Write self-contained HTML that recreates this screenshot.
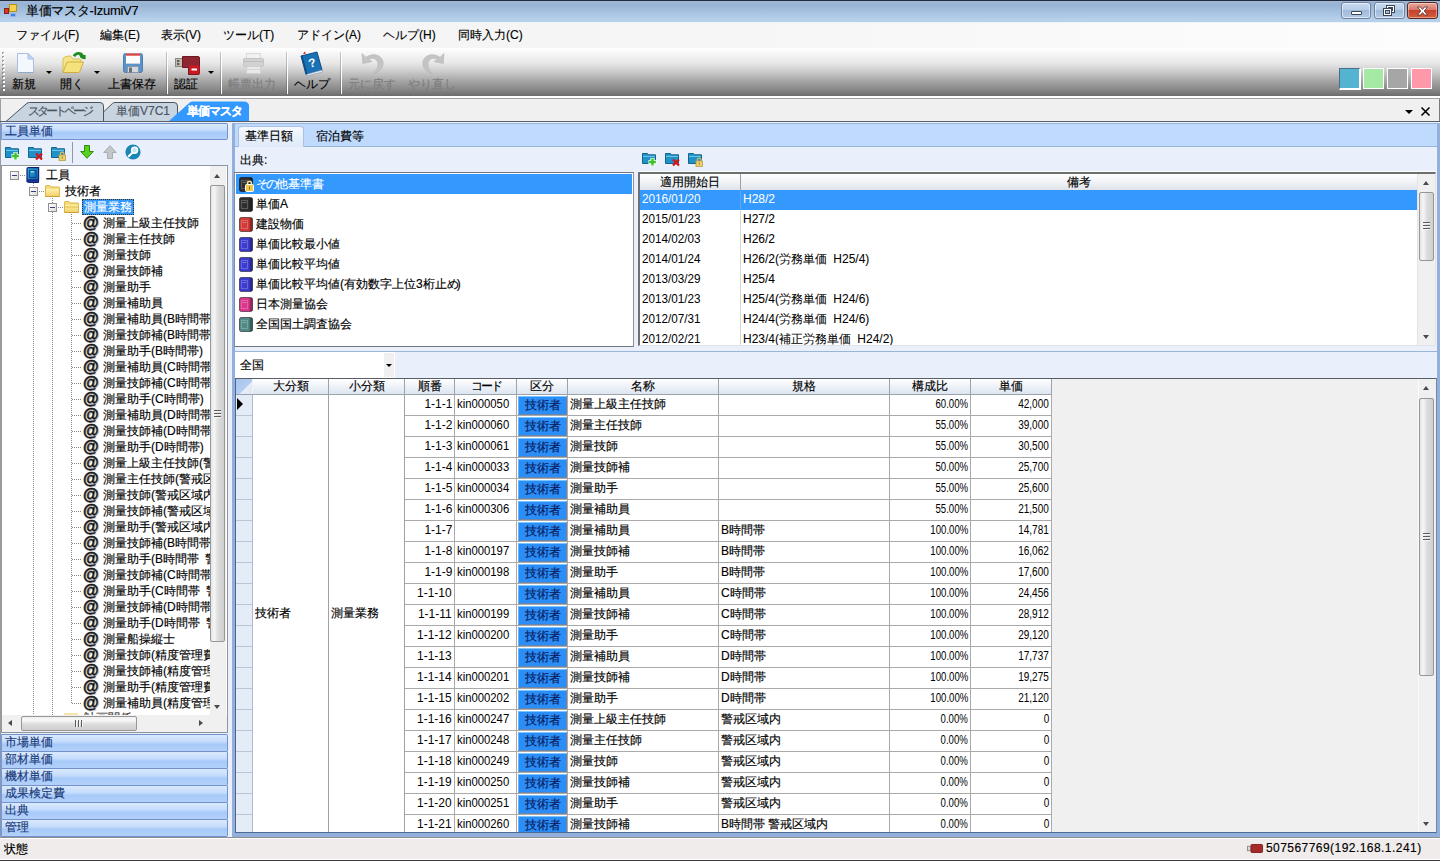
<!DOCTYPE html><html lang="ja"><head><meta charset="utf-8"><title>単価マスタ-IzumiV7</title><style>
*{box-sizing:border-box;margin:0;padding:0}
html,body{width:1440px;height:861px;overflow:hidden;background:#f0f0f0}
body{-webkit-text-stroke:.15px;font-family:"Liberation Sans",sans-serif;font-size:12px;color:#000;position:relative;line-height:1}
.a{position:absolute}
.t{position:absolute;white-space:nowrap;overflow:hidden;line-height:14px;height:14px}
svg{position:absolute;overflow:visible}
#title{left:0;top:0;width:1440px;height:22px;background:linear-gradient(#a9b9d2 0,#9bb5d6 7%,#99b5d5 22%,#a4bfde 46%,#aec9e6 70%,#b7d1ea 90%,#b7cfe8 100%);border-top:1px solid #1f2b3c}
#menu{left:0;top:22px;width:1440px;height:26px;background:linear-gradient(90deg,#f3f3f3,#f6f6f6 50%,#fdfdfd);border-top:1px solid #eef4fb}
#tb{left:0;top:48px;width:1440px;height:48px;background:linear-gradient(#ffffff 0,#f6f6f6 12%,#e8e8e8 31%,#d2d2d2 45%,#bcbcbc 57%,#a4a4a4 70%,#8c8c8c 84%,#6c6c6c 100%)}
.tl{position:absolute;top:77px;height:14px;line-height:14px;white-space:nowrap;text-align:center;font-size:12px}
.sep{position:absolute;top:52px;width:2px;height:42px;border-left:1px solid rgba(60,60,60,.28);border-right:1px solid #fff}
.dd{position:absolute;width:0;height:0;border-left:3px solid transparent;border-right:3px solid transparent;border-top:3px solid #000}
.sq{position:absolute;top:68px;width:22px;height:22px;border:1px solid #fff}
.acc{position:absolute;left:0;width:228px;height:18px;background:linear-gradient(#d9e9fd 0,#c6ddfc 40%,#a8caf9 58%,#b2d0fa 100%);border:1px solid #7392cc;border-left:2px solid #7f97c2;border-radius:2px;color:#1a3a78;padding-left:3px;line-height:14px;white-space:nowrap;overflow:hidden}
.tr{position:absolute;left:103px;width:107px;height:16px;line-height:16px;word-spacing:3px;white-space:nowrap;overflow:hidden}
.at{position:absolute;left:80px;width:21px;height:17px;line-height:15px;font-size:16px;font-weight:bold;font-style:italic;text-align:center;white-space:nowrap;overflow:visible;color:#111;-webkit-text-stroke:.4px #111;text-shadow:1px 1px 1px #a0a0a0}
.hd{position:absolute;left:72px;width:10px;height:1px;background-image:linear-gradient(90deg,#888 50%,transparent 50%);background-size:2px 1px}
.vd{position:absolute;width:1px;background-image:linear-gradient(#888 50%,transparent 50%);background-size:1px 2px}
.li{position:absolute;left:256px;height:20px;line-height:20px;white-space:nowrap;overflow:hidden;width:370px}
.lv{position:absolute;height:20px;line-height:18px;word-spacing:3px;-webkit-text-stroke:.06px;white-space:nowrap;overflow:hidden}
.gh{position:absolute;top:379px;height:15px;line-height:15px;text-align:center;white-space:nowrap;overflow:hidden;background:linear-gradient(#ffffff,#eef2f8 50%,#dde5f0);border-right:1px solid #9aa3ae}
.gc{position:absolute;height:20px;line-height:19px;white-space:nowrap;overflow:hidden;background:#fff}
.kb{position:absolute;left:518px;width:49px;height:19px;line-height:17px;text-align:center;background:#2b8df6;color:#0a1c5e;border-top:1px solid #7cc4ff;border-left:1px solid #6ab4fb;border-right:1px solid #6d86a8;border-bottom:1px solid #6d86a8;white-space:nowrap;overflow:hidden}
.sbt{position:absolute;background:linear-gradient(90deg,#e4e4e4 0,#f6f6f6 25%,#dcdcdc 55%,#cfcfcf 100%);border:1px solid #979797;border-radius:2px}
.sbh{position:absolute;background:linear-gradient(#f0f0f0 0,#f8f8f8 25%,#dcdcdc 55%,#cfcfcf 100%);border:1px solid #979797;border-radius:2px}
.n1,.n2,.n3,.n4,.n5{display:inline-block;font-size:13px;transform-origin:100% 50%;-webkit-text-stroke:0;position:relative;top:-1px}
.n1{transform:scaleX(.92)}
.n2{transform:scaleX(.87);transform-origin:0 50%}
.n3{transform:scaleX(.74)}
.n4{transform:scaleX(.77)}
.n5{transform:scaleX(.9);transform-origin:0 50%;top:0}
.au{position:absolute;width:0;height:0;border-left:3.5px solid transparent;border-right:3.5px solid transparent;border-bottom:4px solid #4a4a4a}
.ad{position:absolute;width:0;height:0;border-left:3.5px solid transparent;border-right:3.5px solid transparent;border-top:4px solid #4a4a4a}
.al{position:absolute;width:0;height:0;border-top:3.5px solid transparent;border-bottom:3.5px solid transparent;border-right:4px solid #4a4a4a}
.ar{position:absolute;width:0;height:0;border-top:3.5px solid transparent;border-bottom:3.5px solid transparent;border-left:4px solid #4a4a4a}
.grip{position:absolute;width:7px;height:8px;background-image:linear-gradient(#5c5c5c 1px,#f4f4f4 1px,#f4f4f4 2px,transparent 2px);background-size:7px 3px}
.gripv{position:absolute;width:8px;height:7px;background-image:linear-gradient(90deg,#5c5c5c 1px,#f4f4f4 1px,#f4f4f4 2px,transparent 2px);background-size:3px 7px}
</style></head><body>
<div id="title" class="a"></div>
<svg style="left:4px;top:4px" width="14" height="14" viewBox="0 0 14 14"><rect x="0.5" y="4.5" width="4" height="5" fill="#d23a2a" stroke="#8a1f14"/><rect x="5.5" y="0.5" width="7" height="7" fill="#f7d24a" stroke="#b8901a"/><rect x="6.5" y="9.5" width="5" height="3" fill="#3f7fe0" stroke="#8fb4ea"/></svg>
<div class="t" style="left:26px;top:3px;font-size:13px;letter-spacing:-.3px;height:16px;line-height:16px">単価マスタ-IzumiV7</div>
<div class="a" style="left:1341px;top:2px;width:30px;height:17px;border:1px solid #6a82a4;border-radius:3px;background:linear-gradient(#c9daee 0,#b7cde7 45%,#9fbadb 50%,#b4cbe6 100%);box-shadow:inset 0 0 0 1px rgba(255,255,255,.55)"></div>
<div class="a" style="left:1351px;top:11px;width:11px;height:4px;background:#fff;border:1px solid #3a4656;border-radius:1px"></div>
<div class="a" style="left:1374px;top:2px;width:31px;height:17px;border:1px solid #6a82a4;border-radius:3px;background:linear-gradient(#c9daee 0,#b7cde7 45%,#9fbadb 50%,#b4cbe6 100%);box-shadow:inset 0 0 0 1px rgba(255,255,255,.55)"></div>
<svg style="left:1383px;top:5px" width="13" height="12" viewBox="0 0 13 12"><rect x="3.5" y="0.5" width="8" height="7" fill="#fff" stroke="#3a4656"/><rect x="5.5" y="2.5" width="4" height="3" fill="#a9c0dd" stroke="#3a4656"/><rect x="0.5" y="3.5" width="8" height="7" fill="#fff" stroke="#3a4656"/><rect x="2.5" y="5.5" width="4" height="3" fill="#a9c0dd" stroke="#3a4656"/></svg>
<div class="a" style="left:1407px;top:2px;width:31px;height:17px;border:1px solid #5a2a22;border-radius:3px;background:linear-gradient(#e8a99c 0,#d9786a 45%,#c6402c 50%,#d4603c 100%);box-shadow:inset 0 0 0 1px rgba(255,255,255,.4)"></div>
<svg style="left:1416px;top:6px" width="13" height="10" viewBox="0 0 13 10"><path d="M1.5 1 L4.5 1 L6.5 3.4 L8.5 1 L11.5 1 L8.2 5 L11.5 9 L8.5 9 L6.5 6.6 L4.5 9 L1.5 9 L4.8 5 Z" fill="#fff" stroke="#4a3030" stroke-width="0.8"/></svg>
<div id="menu" class="a"></div>
<div class="t" style="left:16px;top:28px">ファイル(F)</div>
<div class="t" style="left:100px;top:28px">編集(E)</div>
<div class="t" style="left:161px;top:28px">表示(V)</div>
<div class="t" style="left:223px;top:28px">ツール(T)</div>
<div class="t" style="left:297px;top:28px">アドイン(A)</div>
<div class="t" style="left:383px;top:28px">ヘルプ(H)</div>
<div class="t" style="left:458px;top:28px">同時入力(C)</div>
<div id="tb" class="a"></div>
<div class="a" style="left:0;top:96px;width:1440px;height:2px;background:#fff"></div>
<div class="a" style="left:0;top:98px;width:1440px;height:1px;background:#a0a0a0"></div>
<div class="a" style="left:2px;top:52px;width:2px;height:40px;background-image:linear-gradient(rgba(90,90,90,.55) 50%,transparent 50%);background-size:2px 4px"></div><div class="a" style="left:3px;top:53px;width:2px;height:40px;background-image:linear-gradient(#fff 50%,transparent 50%);background-size:2px 4px"></div>
<div class="tl" style="left:4px;width:40px;color:#000">新規</div>
<div class="tl" style="left:52px;width:40px;color:#000">開く</div>
<div class="tl" style="left:104px;width:56px;color:#000">上書保存</div>
<div class="tl" style="left:166px;width:40px;color:#000">認証</div>
<div class="tl" style="left:224px;width:56px;color:#7e7e7e">帳票出力</div>
<div class="tl" style="left:284px;width:56px;color:#000">ヘルプ</div>
<div class="tl" style="left:344px;width:56px;color:#7e7e7e">元に戻す</div>
<div class="tl" style="left:404px;width:56px;color:#7e7e7e">やり直し</div>
<div class="sep" style="left:166px"></div>
<div class="sep" style="left:220px"></div>
<div class="sep" style="left:286px"></div>
<div class="sep" style="left:340px"></div>
<div class="dd" style="left:46px;top:71px"></div>
<div class="dd" style="left:94px;top:71px"></div>
<div class="dd" style="left:208px;top:71px"></div>
<svg style="left:16px;top:52px" width="19" height="22" viewBox="0 0 19 22"><path d="M1.5 1.5 H12 L17.5 7 V20.5 H1.5 Z" fill="#f3f7fe" stroke="#a9bfe0"/><path d="M12 1.5 V7 H17.5 Z" fill="#c5d9f4" stroke="#a9bfe0"/><path d="M2.5 20.5 H17.5" stroke="#93a9cc"/></svg>
<svg style="left:61px;top:51px" width="25" height="23" viewBox="0 0 25 23"><path d="M2 21 V8.5 Q2 6.5 4 6 L8 5 Q10 4.8 11 6.5 L12 8 H18.5 Q20 8 20 10 V12" fill="#f5e48a" stroke="#d9bd4e"/><path d="M2 21.5 L5.6 12 Q6 11 7 11 H22.5 L18.8 20.5 Q18.4 21.5 17.4 21.5 Z" fill="#f6e27c" stroke="#cfae3c"/><path d="M13 5.2 C15 1.6 20 1.4 21.6 5" fill="none" stroke="#1f8c22" stroke-width="2.8"/><path d="M18.2 4 H24.6 V8 Q21.5 8.6 19.4 6.4 Z" fill="#1f8c22"/></svg>
<svg style="left:123px;top:53px" width="20" height="20" viewBox="0 0 20 20"><rect x="0.5" y="0.5" width="19" height="19" rx="2" fill="#5b93c8" stroke="#4a7fb6"/><rect x="3" y="0.5" width="14" height="10" fill="#fbfbfb"/><rect x="3" y="0.5" width="14" height="2.2" fill="#e0443e"/><path d="M3 10.5 H17" stroke="#c8d2dc"/><rect x="4.5" y="13.5" width="11" height="6" fill="#d4d9df" stroke="#8a98a8"/><rect x="6" y="14.5" width="3" height="5" fill="#6b6f76"/></svg>
<svg style="left:175px;top:56px" width="25" height="19" viewBox="0 0 25 19"><rect x="0.5" y="2.5" width="7" height="8" fill="#c2bcb0" stroke="#8d877b"/><rect x="2" y="4" width="2.4" height="2" fill="#5c5c5c"/><rect x="2" y="7" width="2.4" height="2" fill="#5c5c5c"/><path d="M7.5 0.5 H23 Q24.5 0.5 24.5 2 V17 Q24.5 18.5 23 18.5 H13.5 V11.5 H7.5 Z" fill="#8f2530" stroke="#6a1a22"/><rect x="14" y="9.5" width="10.5" height="8.6" fill="#cc1820"/><rect x="16.5" y="12.5" width="5.5" height="2" fill="#fff"/></svg>
<svg style="left:243px;top:53px" width="21" height="21" viewBox="0 0 21 21"><rect x="3.5" y="0.5" width="14" height="6" fill="#f1f1f1" stroke="#dadada"/><rect x="0.5" y="5.5" width="20" height="8" rx="1.5" fill="#d2d2d2" stroke="#c4c4c4"/><path d="M1 8.5 H20" stroke="#bdbdbd"/><rect x="3.5" y="13.5" width="14" height="7" fill="#e9e9e9" stroke="#cfcfcf"/><path d="M3.5 16.5 H17.5" stroke="#d6d6d6"/></svg>
<svg style="left:300px;top:51px" width="23" height="25" viewBox="0 0 23 25"><path d="M1 5 L17 1 L22 19 L6 23.5 Z" fill="#1a72b6" stroke="#0e4f86"/><path d="M6 23.5 L22 19 L22.3 21 L6.6 25 Z" fill="#e8eef5" stroke="#7f9bb6" stroke-width="0.6"/><path d="M1 5 L2.5 4.4 L7.6 23 L6 23.5 Z" fill="#0e4f86"/><path d="M3 3.2 L4.6 0.5 L6 2.4 Z" fill="#d6281e"/><text x="8.5" y="16" font-family="Liberation Sans" font-size="12" font-weight="bold" fill="#fff" transform="rotate(-14 12 12)">?</text></svg>
<svg style="left:360px;top:52px" width="25" height="23" viewBox="0 0 25 23"><path d="M2 1.5 L2.8 11.5 L12 9.5 L8.6 7.4 C12.5 4.6 18.5 7 18 13 C17.8 16.5 16 19.5 13.5 22 C20.5 19.5 24 14.5 23 9.5 C21.5 2.5 12 0.5 6 5.4 Z" fill="#c4c4c4" stroke="#b4b4b4" stroke-width="0.6"/></svg>
<svg style="left:421px;top:52px" width="25" height="23" viewBox="0 0 25 23"><path transform="translate(25 0) scale(-1 1)" d="M2 1.5 L2.8 11.5 L12 9.5 L8.6 7.4 C12.5 4.6 18.5 7 18 13 C17.8 16.5 16 19.5 13.5 22 C20.5 19.5 24 14.5 23 9.5 C21.5 2.5 12 0.5 6 5.4 Z" fill="#c4c4c4" stroke="#b4b4b4" stroke-width="0.6"/></svg>
<div class="sq" style="left:1339px;background:#52b4d0;border-color:#4a7088 #fff #fff #4a7088;border-width:1px 2px 2px 1px"></div>
<div class="sq" style="left:1363px;width:21px;height:21px;background:#a6e9a4"></div>
<div class="sq" style="left:1387px;width:21px;height:21px;background:#a6a6a6"></div>
<div class="sq" style="left:1411px;width:21px;height:21px;background:#ff98a8"></div>
<div class="a" style="left:0;top:99px;width:1440px;height:22px;background:#f0f0f0;border-left:1px solid #a0a0a0;border-right:1px solid #7a7a7a"></div>
<svg style="left:0;top:99px" width="260" height="23" viewBox="0 0 260 23"><path d="M6 22.5 L27 4.2 Q28 3.5 29.5 3.5 H100 Q103.5 3.5 103.5 7 V22.5 Z" fill="#c8d4e0" stroke="#4c545e"/><path d="M103.5 13 L112.5 4.4 Q113.5 3.5 115 3.5 H174 Q177.5 3.5 177.5 7 V22.5 H103.5 Z" fill="#c8d4e0" stroke="#4c545e"/><path d="M169 22.5 L189.5 4.2 Q190.5 3 192.5 3 H244 Q248.5 3 248.5 7 V22.5 Z" fill="#3399ff" stroke="#3399ff"/></svg>
<div class="a" style="left:0;top:121px;width:1440px;height:1px;background:#5a5e66"></div>
<div class="t" style="left:28px;top:104px;color:#4a5562;letter-spacing:-3px;width:72px">スタートページ</div>
<div class="t" style="left:116px;top:104px;color:#4a5562">単価V7C1</div>
<div class="t" style="left:187px;top:104px;color:#fff;font-weight:bold;letter-spacing:-1px">単価マスタ</div>
<div class="ad" style="left:1405px;top:110px;border-width:4px 4px 0 4px;border-top-color:#000"></div>
<svg style="left:1421px;top:107px" width="9" height="9" viewBox="0 0 9 9"><path d="M0.5 0.5 L8.5 8.5 M8.5 0.5 L0.5 8.5" stroke="#000" stroke-width="1.6"/></svg>
<div class="a" style="left:0;top:122px;width:1440px;height:715px;background:#e9f0fb;border-left:1px solid #9a9a9a"></div>
<div class="acc" style="top:123px;height:17px">工員単価</div>
<svg style="left:5px;top:146px" width="16" height="15" viewBox="0 0 16 15"><path d="M0.5 11.5 V1.5 H5.5 L6.5 2.8 H13.5 V11.5 Z" fill="#1f93c7" stroke="#14658c"/><path d="M1 4.4 H13" stroke="#7fd0ee" stroke-width="0.9"/><path d="M10.5 6 V14 M6.5 10 H14.5" stroke="#fff" stroke-width="4.2"/><path d="M10.5 6.6 V13.4 M7.1 10 H13.9" stroke="#3ec22e" stroke-width="2.4"/></svg>
<svg style="left:28px;top:146px" width="16" height="15" viewBox="0 0 16 15"><path d="M0.5 11.5 V1.5 H5.5 L6.5 2.8 H13.5 V11.5 Z" fill="#1f93c7" stroke="#14658c"/><path d="M1 4.4 H13" stroke="#7fd0ee" stroke-width="0.9"/><path d="M8 7.5 L14 13.5 M14 7.5 L8 13.5" stroke="#d3141a" stroke-width="2.2"/></svg>
<svg style="left:51px;top:146px" width="16" height="15" viewBox="0 0 16 15"><path d="M0.5 11.5 V1.5 H5.5 L6.5 2.8 H13.5 V11.5 Z" fill="#1f93c7" stroke="#14658c"/><path d="M1 4.4 H13" stroke="#7fd0ee" stroke-width="0.9"/><rect x="8" y="9" width="6.4" height="5.4" fill="#ecd070" stroke="#b89a3c" stroke-width="0.8"/><path d="M9.4 9 V7.8 Q9.4 6.2 11.2 6.2 Q13 6.2 13 7.8 V9" fill="none" stroke="#d8bc5c" stroke-width="1.2"/><rect x="10.8" y="10.6" width="0.9" height="2" fill="#8a7220"/></svg>
<div class="a" style="left:72px;top:142px;width:1px;height:21px;background:#8f99a8"></div>
<svg style="left:80px;top:145px" width="14" height="14" viewBox="0 0 14 14"><path d="M4.5 0.5 H9.5 V6.5 H13.3 L7 13.3 L0.7 6.5 H4.5 Z" fill="#5bd11f" stroke="#2f8a10"/></svg>
<svg style="left:103px;top:145px" width="14" height="14" viewBox="0 0 14 14"><path d="M4.5 13.5 H9.5 V7.5 H13.3 L7 0.7 L0.7 7.5 H4.5 Z" fill="#c4c7ca" stroke="#a9acb0"/></svg>
<svg style="left:125px;top:144px" width="16" height="16" viewBox="0 0 16 16"><circle cx="8" cy="8" r="7.6" fill="#1a86b4"/><circle cx="9.6" cy="6.2" r="3" fill="#bfe6f5" stroke="#fff" stroke-width="1.4"/><path d="M7.4 8.6 L3.8 12.2" stroke="#fff" stroke-width="2" stroke-linecap="round"/></svg>
<div class="a" style="left:1px;top:165px;width:227px;height:568px;background:#fff;border:1px solid #8f959e;border-left-color:#9a9a9a"></div>
<div class="vd" style="left:33px;top:183px;height:550px"></div>
<div class="vd" style="left:52px;top:198px;height:535px"></div>
<div class="vd" style="left:71px;top:214px;height:490px"></div>
<div class="a" style="left:10px;top:171px;width:9px;height:9px;border:1px solid #919191;background:linear-gradient(135deg,#fff,#dcdcdc)"></div>
<div class="a" style="left:12px;top:175px;width:5px;height:1px;background:#3b3b8a"></div>
<div class="a" style="left:29px;top:187px;width:9px;height:9px;border:1px solid #919191;background:linear-gradient(135deg,#fff,#dcdcdc)"></div>
<div class="a" style="left:31px;top:191px;width:5px;height:1px;background:#3b3b8a"></div>
<div class="a" style="left:48px;top:203px;width:9px;height:9px;border:1px solid #919191;background:linear-gradient(135deg,#fff,#dcdcdc)"></div>
<div class="a" style="left:50px;top:207px;width:5px;height:1px;background:#3b3b8a"></div>
<div class="hd" style="left:20px;top:175px;width:6px"></div>
<div class="hd" style="left:39px;top:191px;width:6px"></div>
<div class="hd" style="left:58px;top:207px;width:6px"></div>
<svg style="left:26px;top:167px" width="14" height="16" viewBox="0 0 14 16"><defs><linearGradient id="bk" x1="0" y1="0" x2="1" y2="1"><stop offset="0" stop-color="#2fb0dc"/><stop offset="1" stop-color="#0c5aa6"/></linearGradient></defs><path d="M1 2 Q1 0.6 2.4 0.6 H12.6 V13 H2.6 Q1 13 1 14.4 Z" fill="url(#bk)" stroke="#0e1f7c" stroke-width="1.2"/><path d="M1 14.2 Q1.2 15.5 2.6 15.5 H12.6 V13.2 H3 Q1.4 13.2 1 14.2 Z" fill="#1a3a9a" stroke="#0e1f7c"/><rect x="3.6" y="3.4" width="6.4" height="7" fill="none" stroke="#0b3f86" stroke-width="0.9"/><path d="M4.6 4.8 H8" stroke="#d8f2ff" stroke-width="1"/></svg>
<svg width="0" height="0" style="left:0;top:0"><defs><linearGradient id="fg" x1="0" y1="0" x2="0" y2="1"><stop offset="0" stop-color="#fdf0ae"/><stop offset="1" stop-color="#f3d36a"/></linearGradient></defs></svg>
<svg style="left:45px;top:185px" width="15" height="12" viewBox="0 0 15 12"><path d="M0.5 11.5 V1.2 Q0.5 0.5 1.2 0.5 H4.8 L6.2 2 H13.8 Q14.5 2 14.5 2.7 V11.5 Z" fill="#f6da76" stroke="#d9b64e"/><path d="M1 3.8 H14 V11 H1 Z" fill="url(#fg)"/><path d="M0.5 11.5 H14.5" stroke="#c9a038"/></svg>
<svg style="left:64px;top:201px" width="15" height="12" viewBox="0 0 15 12"><path d="M0.5 11.5 V1.2 Q0.5 0.5 1.2 0.5 H4.8 L6.2 2 H13.8 Q14.5 2 14.5 2.7 V11.5 Z" fill="#f6da76" stroke="#d9b64e"/><path d="M1 3.8 H14 V11 H1 Z" fill="url(#fg)"/><path d="M1 6 H14" stroke="#e6c252" stroke-width="1.2"/><path d="M0.5 11.5 H14.5" stroke="#c9a038"/></svg>
<div class="t" style="left:46px;top:168px">工員</div>
<div class="t" style="left:65px;top:184px">技術者</div>
<div class="a" style="left:82px;top:199px;width:52px;height:16px;background:#3399ff;outline:1px dotted #3a2f18;outline-offset:-1px"></div>
<div class="t" style="left:84px;top:200px;color:#fff">測量業務</div>
<div class="hd" style="top:223px"></div>
<div class="at" style="top:215px">@</div>
<div class="tr" style="top:215px">測量上級主任技師</div>
<div class="hd" style="top:239px"></div>
<div class="at" style="top:231px">@</div>
<div class="tr" style="top:231px">測量主任技師</div>
<div class="hd" style="top:255px"></div>
<div class="at" style="top:247px">@</div>
<div class="tr" style="top:247px">測量技師</div>
<div class="hd" style="top:271px"></div>
<div class="at" style="top:263px">@</div>
<div class="tr" style="top:263px">測量技師補</div>
<div class="hd" style="top:287px"></div>
<div class="at" style="top:279px">@</div>
<div class="tr" style="top:279px">測量助手</div>
<div class="hd" style="top:303px"></div>
<div class="at" style="top:295px">@</div>
<div class="tr" style="top:295px">測量補助員</div>
<div class="hd" style="top:319px"></div>
<div class="at" style="top:311px">@</div>
<div class="tr" style="top:311px">測量補助員(B時間帯)</div>
<div class="hd" style="top:335px"></div>
<div class="at" style="top:327px">@</div>
<div class="tr" style="top:327px">測量技師補(B時間帯)</div>
<div class="hd" style="top:351px"></div>
<div class="at" style="top:343px">@</div>
<div class="tr" style="top:343px">測量助手(B時間帯)</div>
<div class="hd" style="top:367px"></div>
<div class="at" style="top:359px">@</div>
<div class="tr" style="top:359px">測量補助員(C時間帯)</div>
<div class="hd" style="top:383px"></div>
<div class="at" style="top:375px">@</div>
<div class="tr" style="top:375px">測量技師補(C時間帯)</div>
<div class="hd" style="top:399px"></div>
<div class="at" style="top:391px">@</div>
<div class="tr" style="top:391px">測量助手(C時間帯)</div>
<div class="hd" style="top:415px"></div>
<div class="at" style="top:407px">@</div>
<div class="tr" style="top:407px">測量補助員(D時間帯)</div>
<div class="hd" style="top:431px"></div>
<div class="at" style="top:423px">@</div>
<div class="tr" style="top:423px">測量技師補(D時間帯)</div>
<div class="hd" style="top:447px"></div>
<div class="at" style="top:439px">@</div>
<div class="tr" style="top:439px">測量助手(D時間帯)</div>
<div class="hd" style="top:463px"></div>
<div class="at" style="top:455px">@</div>
<div class="tr" style="top:455px">測量上級主任技師(警戒区域内)</div>
<div class="hd" style="top:479px"></div>
<div class="at" style="top:471px">@</div>
<div class="tr" style="top:471px">測量主任技師(警戒区域内)</div>
<div class="hd" style="top:495px"></div>
<div class="at" style="top:487px">@</div>
<div class="tr" style="top:487px">測量技師(警戒区域内)</div>
<div class="hd" style="top:511px"></div>
<div class="at" style="top:503px">@</div>
<div class="tr" style="top:503px">測量技師補(警戒区域内)</div>
<div class="hd" style="top:527px"></div>
<div class="at" style="top:519px">@</div>
<div class="tr" style="top:519px">測量助手(警戒区域内)</div>
<div class="hd" style="top:543px"></div>
<div class="at" style="top:535px">@</div>
<div class="tr" style="top:535px">測量技師補(B時間帯 警戒区域内)</div>
<div class="hd" style="top:559px"></div>
<div class="at" style="top:551px">@</div>
<div class="tr" style="top:551px">測量助手(B時間帯 警戒区域内)</div>
<div class="hd" style="top:575px"></div>
<div class="at" style="top:567px">@</div>
<div class="tr" style="top:567px">測量技師補(C時間帯 警戒区域内)</div>
<div class="hd" style="top:591px"></div>
<div class="at" style="top:583px">@</div>
<div class="tr" style="top:583px">測量助手(C時間帯 警戒区域内)</div>
<div class="hd" style="top:607px"></div>
<div class="at" style="top:599px">@</div>
<div class="tr" style="top:599px">測量技師補(D時間帯 警戒区域内)</div>
<div class="hd" style="top:623px"></div>
<div class="at" style="top:615px">@</div>
<div class="tr" style="top:615px">測量助手(D時間帯 警戒区域内)</div>
<div class="hd" style="top:639px"></div>
<div class="at" style="top:631px">@</div>
<div class="tr" style="top:631px">測量船操縦士</div>
<div class="hd" style="top:655px"></div>
<div class="at" style="top:647px">@</div>
<div class="tr" style="top:647px">測量技師(精度管理費)</div>
<div class="hd" style="top:671px"></div>
<div class="at" style="top:663px">@</div>
<div class="tr" style="top:663px">測量技師補(精度管理費)</div>
<div class="hd" style="top:687px"></div>
<div class="at" style="top:679px">@</div>
<div class="tr" style="top:679px">測量助手(精度管理費)</div>
<div class="hd" style="top:703px"></div>
<div class="at" style="top:695px">@</div>
<div class="tr" style="top:695px">測量補助員(精度管理費)</div>
<div class="a" style="left:64px;top:711px;width:146px;height:4px;overflow:hidden"><div class="t" style="left:20px;top:0;color:#333">計画関係</div><div class="a" style="left:0;top:2px;width:14px;height:2px;background:#f8e6a8"></div></div>
<div class="a" style="left:210px;top:166px;width:16px;height:549px;background:#f0f0f0"></div>
<div class="au" style="left:214px;top:174px"></div>
<div class="sbt" style="left:210px;top:185px;width:15px;height:457px"></div>
<div class="grip" style="left:214px;top:410px"></div>
<div class="ad" style="left:214px;top:705px"></div>
<div class="a" style="left:2px;top:715px;width:225px;height:17px;background:#f0f0f0"></div>
<div class="al" style="left:8px;top:720px"></div>
<div class="sbh" style="left:21px;top:716px;width:116px;height:15px"></div>
<div class="gripv" style="left:75px;top:720px"></div>
<div class="ar" style="left:199px;top:720px"></div>
<div class="acc" style="top:734px">市場単価</div>
<div class="acc" style="top:751px">部材単価</div>
<div class="acc" style="top:768px">機材単価</div>
<div class="acc" style="top:785px">成果検定費</div>
<div class="acc" style="top:802px">出典</div>
<div class="acc" style="top:819px">管理</div>
<div class="a" style="left:232px;top:123px;width:1208px;height:714px;background:#e9f0fb;border:3px solid #93afdb;border-top:1px solid #9bb5d8;border-bottom-width:4px"></div>
<div class="a" style="left:235px;top:124px;width:1202px;height:23px;background:#bfdafd;border-bottom:1px solid #98b4d8"></div>
<div class="a" style="left:238px;top:126px;width:66px;height:21px;background:linear-gradient(#f4f8fe,#dfe9f8);border:1px solid #a9c3e8;border-bottom:0;border-radius:4px 4px 0 0"></div>
<div class="t" style="left:245px;top:129px">基準日額</div>
<div class="t" style="left:316px;top:129px">宿泊費等</div>
<div class="t" style="left:240px;top:153px">出典:</div>
<div class="a" style="left:234px;top:172px;width:400px;height:175px;background:#fff;border:1px solid #72777f;border-left-color:#7f8aa3;border-right-color:#8a8f98"></div>
<div class="a" style="left:236px;top:174px;width:396px;height:20px;background:#3399ff"></div>
<svg style="left:239px;top:177px" width="14" height="15" viewBox="0 0 14 15"><rect x="0.5" y="0.5" width="13" height="14" rx="1.8" fill="#2e2e2e" stroke="rgba(0,0,0,.5)"/><rect x="10.6" y="1" width="2.9" height="13" fill="rgba(0,0,0,.3)"/><rect x="2.5" y="3.5" width="6" height="8" fill="none" stroke="rgba(255,255,255,.22)"/><path d="M3.5 5.5 H7.5" stroke="rgba(255,255,255,.3)"/><rect x="6.5" y="7.5" width="8" height="7" rx="1" fill="#eec84a" stroke="#fff"/><path d="M8.6 7.5 V6 Q8.6 4.2 10.5 4.2 Q12.4 4.2 12.4 6 V7.5" fill="none" stroke="#f3e6a6" stroke-width="1.5"/><rect x="10" y="9.5" width="1" height="3" fill="#8a6d14"/></svg>
<div class="li" style="top:174px;color:#fff;"><span style="letter-spacing:-2px">その</span>他基準書</div>
<svg style="left:239px;top:197px" width="14" height="15" viewBox="0 0 14 15"><rect x="0.5" y="0.5" width="13" height="14" rx="1.8" fill="#2e2e2e" stroke="rgba(0,0,0,.5)"/><rect x="10.6" y="1" width="2.9" height="13" fill="rgba(0,0,0,.3)"/><rect x="2.5" y="3.5" width="6" height="8" fill="none" stroke="rgba(255,255,255,.22)"/><path d="M3.5 5.5 H7.5" stroke="rgba(255,255,255,.3)"/></svg>
<div class="li" style="top:194px;">単価A</div>
<svg style="left:239px;top:217px" width="14" height="15" viewBox="0 0 14 15"><rect x="0.5" y="0.5" width="13" height="14" rx="1.8" fill="#d13a36" stroke="rgba(0,0,0,.5)"/><rect x="10.6" y="1" width="2.9" height="13" fill="rgba(0,0,0,.3)"/><rect x="2.5" y="3.5" width="6" height="8" fill="none" stroke="rgba(255,255,255,.22)"/><path d="M3.5 5.5 H7.5" stroke="rgba(255,255,255,.3)"/></svg>
<div class="li" style="top:214px;">建設物価</div>
<svg style="left:239px;top:237px" width="14" height="15" viewBox="0 0 14 15"><rect x="0.5" y="0.5" width="13" height="14" rx="1.8" fill="#3b3ccf" stroke="rgba(0,0,0,.5)"/><rect x="10.6" y="1" width="2.9" height="13" fill="rgba(0,0,0,.3)"/><rect x="2.5" y="3.5" width="6" height="8" fill="none" stroke="rgba(255,255,255,.22)"/><path d="M3.5 5.5 H7.5" stroke="rgba(255,255,255,.3)"/></svg>
<div class="li" style="top:234px;">単価比較最小値</div>
<svg style="left:239px;top:257px" width="14" height="15" viewBox="0 0 14 15"><rect x="0.5" y="0.5" width="13" height="14" rx="1.8" fill="#3b3ccf" stroke="rgba(0,0,0,.5)"/><rect x="10.6" y="1" width="2.9" height="13" fill="rgba(0,0,0,.3)"/><rect x="2.5" y="3.5" width="6" height="8" fill="none" stroke="rgba(255,255,255,.22)"/><path d="M3.5 5.5 H7.5" stroke="rgba(255,255,255,.3)"/></svg>
<div class="li" style="top:254px;">単価比較平均値</div>
<svg style="left:239px;top:277px" width="14" height="15" viewBox="0 0 14 15"><rect x="0.5" y="0.5" width="13" height="14" rx="1.8" fill="#3b3ccf" stroke="rgba(0,0,0,.5)"/><rect x="10.6" y="1" width="2.9" height="13" fill="rgba(0,0,0,.3)"/><rect x="2.5" y="3.5" width="6" height="8" fill="none" stroke="rgba(255,255,255,.22)"/><path d="M3.5 5.5 H7.5" stroke="rgba(255,255,255,.3)"/></svg>
<div class="li" style="top:274px;">単価比較平均値(有効数字上位3桁止<span style="letter-spacing:-2px">め</span>)</div>
<svg style="left:239px;top:297px" width="14" height="15" viewBox="0 0 14 15"><rect x="0.5" y="0.5" width="13" height="14" rx="1.8" fill="#d8378a" stroke="rgba(0,0,0,.5)"/><rect x="10.6" y="1" width="2.9" height="13" fill="rgba(0,0,0,.3)"/><rect x="2.5" y="3.5" width="6" height="8" fill="none" stroke="rgba(255,255,255,.22)"/><path d="M3.5 5.5 H7.5" stroke="rgba(255,255,255,.3)"/></svg>
<div class="li" style="top:294px;">日本測量協会</div>
<svg style="left:239px;top:317px" width="14" height="15" viewBox="0 0 14 15"><rect x="0.5" y="0.5" width="13" height="14" rx="1.8" fill="#4f8a84" stroke="rgba(0,0,0,.5)"/><rect x="10.6" y="1" width="2.9" height="13" fill="rgba(0,0,0,.3)"/><rect x="2.5" y="3.5" width="6" height="8" fill="none" stroke="rgba(255,255,255,.22)"/><path d="M3.5 5.5 H7.5" stroke="rgba(255,255,255,.3)"/></svg>
<div class="li" style="top:314px;">全国国土調査協会</div>
<svg style="left:642px;top:152px" width="16" height="15" viewBox="0 0 16 15"><path d="M0.5 11.5 V1.5 H5.5 L6.5 2.8 H13.5 V11.5 Z" fill="#1f93c7" stroke="#14658c"/><path d="M1 4.4 H13" stroke="#7fd0ee" stroke-width="0.9"/><path d="M10.5 6 V14 M6.5 10 H14.5" stroke="#fff" stroke-width="4.2"/><path d="M10.5 6.6 V13.4 M7.1 10 H13.9" stroke="#3ec22e" stroke-width="2.4"/></svg>
<svg style="left:665px;top:152px" width="16" height="15" viewBox="0 0 16 15"><path d="M0.5 11.5 V1.5 H5.5 L6.5 2.8 H13.5 V11.5 Z" fill="#1f93c7" stroke="#14658c"/><path d="M1 4.4 H13" stroke="#7fd0ee" stroke-width="0.9"/><path d="M8 7.5 L14 13.5 M14 7.5 L8 13.5" stroke="#d3141a" stroke-width="2.2"/></svg>
<svg style="left:688px;top:152px" width="16" height="15" viewBox="0 0 16 15"><path d="M0.5 11.5 V1.5 H5.5 L6.5 2.8 H13.5 V11.5 Z" fill="#1f93c7" stroke="#14658c"/><path d="M1 4.4 H13" stroke="#7fd0ee" stroke-width="0.9"/><rect x="8" y="9" width="6.4" height="5.4" fill="#ecd070" stroke="#b89a3c" stroke-width="0.8"/><path d="M9.4 9 V7.8 Q9.4 6.2 11.2 6.2 Q13 6.2 13 7.8 V9" fill="none" stroke="#d8bc5c" stroke-width="1.2"/><rect x="10.8" y="10.6" width="0.9" height="2" fill="#8a7220"/></svg>
<div class="a" style="left:638px;top:171px;width:799px;height:1px;background:#fbfcfe"></div>
<div class="a" style="left:638px;top:172px;width:798px;height:174px;background:#fff;border:1px solid #e3e3e3;border-top:2px solid #6e6e6e;border-left:2px solid #6e7078"></div>
<div class="a" style="left:640px;top:174px;width:777px;height:16px;background:linear-gradient(#ffffff,#f1f3f6 50%,#dfe3ea)"></div>
<div class="a" style="left:740px;top:174px;width:1px;height:171px;background:#d4d7dc"></div>
<div class="a" style="left:740px;top:174px;width:1px;height:16px;background:#9aa0a8"></div>
<div class="t" style="left:640px;top:175px;width:100px;text-align:center">適用開始日</div>
<div class="t" style="left:741px;top:175px;width:676px;text-align:center">備考</div>
<div class="a" style="left:640px;top:190px;width:777px;height:20px;background:#3399ff"></div>
<div class="a" style="left:740px;top:190px;width:1px;height:20px;background:#5aa8f5"></div>
<div class="a" style="left:640px;top:190px;width:777px;height:155px;overflow:hidden">
<div class="lv" style="left:2px;top:0px;width:96px;color:#fff;"><span class="n5">2016/01/20</span></div>
<div class="lv" style="left:103px;top:0px;width:660px;color:#fff;">H28/2</div>
<div class="lv" style="left:2px;top:20px;width:96px;"><span class="n5">2015/01/23</span></div>
<div class="lv" style="left:103px;top:20px;width:660px;">H27/2</div>
<div class="lv" style="left:2px;top:40px;width:96px;"><span class="n5">2014/02/03</span></div>
<div class="lv" style="left:103px;top:40px;width:660px;">H26/2</div>
<div class="lv" style="left:2px;top:60px;width:96px;"><span class="n5">2014/01/24</span></div>
<div class="lv" style="left:103px;top:60px;width:660px;">H26/2(労務単価 H25/4)</div>
<div class="lv" style="left:2px;top:80px;width:96px;"><span class="n5">2013/03/29</span></div>
<div class="lv" style="left:103px;top:80px;width:660px;">H25/4</div>
<div class="lv" style="left:2px;top:100px;width:96px;"><span class="n5">2013/01/23</span></div>
<div class="lv" style="left:103px;top:100px;width:660px;">H25/4(労務単価 H24/6)</div>
<div class="lv" style="left:2px;top:120px;width:96px;"><span class="n5">2012/07/31</span></div>
<div class="lv" style="left:103px;top:120px;width:660px;">H24/4(労務単価 H24/6)</div>
<div class="lv" style="left:2px;top:140px;width:96px;"><span class="n5">2012/02/21</span></div>
<div class="lv" style="left:103px;top:140px;width:660px;">H23/4(補正労務単価 H24/2)</div>
</div>
<div class="a" style="left:1417px;top:174px;width:18px;height:171px;background:#f0f0f0;border-left:1px solid #e4e4e4"></div>
<div class="au" style="left:1423px;top:181px"></div>
<div class="sbt" style="left:1419px;top:192px;width:15px;height:69px"></div>
<div class="grip" style="left:1423px;top:222px"></div>
<div class="ad" style="left:1423px;top:335px"></div>
<div class="a" style="left:235px;top:351px;width:1202px;height:1px;background:#9bb5d8"></div>
<div class="a" style="left:235px;top:352px;width:160px;height:26px;background:#fff"></div>
<div class="a" style="left:384px;top:353px;width:10px;height:24px;background:#f0f0f0"></div>
<div class="dd" style="left:386px;top:364px"></div>
<div class="t" style="left:240px;top:358px">全国</div>
<div class="a" style="left:235px;top:378px;width:1202px;height:455px;background:#f0f0f0;border-top:1px solid #595d66;border-left:1px solid #50648a;border-bottom:1px solid #4f6a94;border-right:1px solid #6e86a8"></div>
<div class="gh" style="left:236px;width:17px"></div>
<div class="gh" style="left:253px;width:76px">大分類</div>
<div class="gh" style="left:329px;width:76px">小分類</div>
<div class="gh" style="left:405px;width:50px">順番</div>
<div class="gh" style="left:455px;width:62px"><span style="letter-spacing:-2px">コード</span></div>
<div class="gh" style="left:517px;width:51px">区分</div>
<div class="gh" style="left:568px;width:151px">名称</div>
<div class="gh" style="left:719px;width:171px">規格</div>
<div class="gh" style="left:890px;width:81px">構成比</div>
<div class="gh" style="left:971px;width:81px">単価</div>
<div class="a" style="left:236px;top:379px;width:17px;height:15px;background:linear-gradient(135deg,#a6c4ee 0,#b2cdf1 58%,#e6edf8 60%,#dfe8f4 100%);border-right:1px solid #eef3fa"></div>
<div class="a" style="left:236px;top:394px;width:816px;height:1px;background:#9aa3ae"></div>
<div class="a" style="left:236px;top:395px;width:816px;height:437px;overflow:hidden;background:#fff">
<div class="a" style="left:0;top:0;width:16px;height:437px;background:#e4ecf7"></div>
<div class="a" style="left:16px;top:0;width:1px;height:437px;background:#b0bccb"></div>
<div class="a" style="left:92px;top:0;width:1px;height:437px;background:#9aa3ae"></div>
<div class="a" style="left:168px;top:0;width:1px;height:437px;background:#9aa3ae"></div>
<div class="a" style="left:0;top:20px;width:16px;height:1px;background:#b9c6d8"></div>
<div class="a" style="left:169px;top:20px;width:647px;height:1px;background:#aaa"></div>
<div class="gc" style="left:169px;top:0px;width:49px;text-align:right;padding-right:2px"><span class="n1">1-1-1</span></div>
<div class="gc" style="left:219px;top:0px;width:61px;padding-left:2px"><span class="n2">kin000050</span></div>
<div class="kb" style="left:282px;top:1px">技術者</div>
<div class="gc" style="left:332px;top:0px;width:150px;padding-left:2px">測量上級主任技師</div>
<div class="gc" style="left:483px;top:0px;width:170px;padding-left:2px"></div>
<div class="gc" style="left:654px;top:0px;width:80px;text-align:right;padding-right:2px"><span class="n3">60.00%</span></div>
<div class="gc" style="left:735px;top:0px;width:80px;text-align:right;padding-right:2px"><span class="n4">42,000</span></div>
<div class="a" style="left:0;top:41px;width:16px;height:1px;background:#b9c6d8"></div>
<div class="a" style="left:169px;top:41px;width:647px;height:1px;background:#aaa"></div>
<div class="gc" style="left:169px;top:21px;width:49px;text-align:right;padding-right:2px"><span class="n1">1-1-2</span></div>
<div class="gc" style="left:219px;top:21px;width:61px;padding-left:2px"><span class="n2">kin000060</span></div>
<div class="kb" style="left:282px;top:22px">技術者</div>
<div class="gc" style="left:332px;top:21px;width:150px;padding-left:2px">測量主任技師</div>
<div class="gc" style="left:483px;top:21px;width:170px;padding-left:2px"></div>
<div class="gc" style="left:654px;top:21px;width:80px;text-align:right;padding-right:2px"><span class="n3">55.00%</span></div>
<div class="gc" style="left:735px;top:21px;width:80px;text-align:right;padding-right:2px"><span class="n4">39,000</span></div>
<div class="a" style="left:0;top:62px;width:16px;height:1px;background:#b9c6d8"></div>
<div class="a" style="left:169px;top:62px;width:647px;height:1px;background:#aaa"></div>
<div class="gc" style="left:169px;top:42px;width:49px;text-align:right;padding-right:2px"><span class="n1">1-1-3</span></div>
<div class="gc" style="left:219px;top:42px;width:61px;padding-left:2px"><span class="n2">kin000061</span></div>
<div class="kb" style="left:282px;top:43px">技術者</div>
<div class="gc" style="left:332px;top:42px;width:150px;padding-left:2px">測量技師</div>
<div class="gc" style="left:483px;top:42px;width:170px;padding-left:2px"></div>
<div class="gc" style="left:654px;top:42px;width:80px;text-align:right;padding-right:2px"><span class="n3">55.00%</span></div>
<div class="gc" style="left:735px;top:42px;width:80px;text-align:right;padding-right:2px"><span class="n4">30,500</span></div>
<div class="a" style="left:0;top:83px;width:16px;height:1px;background:#b9c6d8"></div>
<div class="a" style="left:169px;top:83px;width:647px;height:1px;background:#aaa"></div>
<div class="gc" style="left:169px;top:63px;width:49px;text-align:right;padding-right:2px"><span class="n1">1-1-4</span></div>
<div class="gc" style="left:219px;top:63px;width:61px;padding-left:2px"><span class="n2">kin000033</span></div>
<div class="kb" style="left:282px;top:64px">技術者</div>
<div class="gc" style="left:332px;top:63px;width:150px;padding-left:2px">測量技師補</div>
<div class="gc" style="left:483px;top:63px;width:170px;padding-left:2px"></div>
<div class="gc" style="left:654px;top:63px;width:80px;text-align:right;padding-right:2px"><span class="n3">50.00%</span></div>
<div class="gc" style="left:735px;top:63px;width:80px;text-align:right;padding-right:2px"><span class="n4">25,700</span></div>
<div class="a" style="left:0;top:104px;width:16px;height:1px;background:#b9c6d8"></div>
<div class="a" style="left:169px;top:104px;width:647px;height:1px;background:#aaa"></div>
<div class="gc" style="left:169px;top:84px;width:49px;text-align:right;padding-right:2px"><span class="n1">1-1-5</span></div>
<div class="gc" style="left:219px;top:84px;width:61px;padding-left:2px"><span class="n2">kin000034</span></div>
<div class="kb" style="left:282px;top:85px">技術者</div>
<div class="gc" style="left:332px;top:84px;width:150px;padding-left:2px">測量助手</div>
<div class="gc" style="left:483px;top:84px;width:170px;padding-left:2px"></div>
<div class="gc" style="left:654px;top:84px;width:80px;text-align:right;padding-right:2px"><span class="n3">55.00%</span></div>
<div class="gc" style="left:735px;top:84px;width:80px;text-align:right;padding-right:2px"><span class="n4">25,600</span></div>
<div class="a" style="left:0;top:125px;width:16px;height:1px;background:#b9c6d8"></div>
<div class="a" style="left:169px;top:125px;width:647px;height:1px;background:#aaa"></div>
<div class="gc" style="left:169px;top:105px;width:49px;text-align:right;padding-right:2px"><span class="n1">1-1-6</span></div>
<div class="gc" style="left:219px;top:105px;width:61px;padding-left:2px"><span class="n2">kin000306</span></div>
<div class="kb" style="left:282px;top:106px">技術者</div>
<div class="gc" style="left:332px;top:105px;width:150px;padding-left:2px">測量補助員</div>
<div class="gc" style="left:483px;top:105px;width:170px;padding-left:2px"></div>
<div class="gc" style="left:654px;top:105px;width:80px;text-align:right;padding-right:2px"><span class="n3">55.00%</span></div>
<div class="gc" style="left:735px;top:105px;width:80px;text-align:right;padding-right:2px"><span class="n4">21,500</span></div>
<div class="a" style="left:0;top:146px;width:16px;height:1px;background:#b9c6d8"></div>
<div class="a" style="left:169px;top:146px;width:647px;height:1px;background:#aaa"></div>
<div class="gc" style="left:169px;top:126px;width:49px;text-align:right;padding-right:2px"><span class="n1">1-1-7</span></div>
<div class="gc" style="left:219px;top:126px;width:61px;padding-left:2px"><span class="n2"></span></div>
<div class="kb" style="left:282px;top:127px">技術者</div>
<div class="gc" style="left:332px;top:126px;width:150px;padding-left:2px">測量補助員</div>
<div class="gc" style="left:483px;top:126px;width:170px;padding-left:2px">B時間帯</div>
<div class="gc" style="left:654px;top:126px;width:80px;text-align:right;padding-right:2px"><span class="n3">100.00%</span></div>
<div class="gc" style="left:735px;top:126px;width:80px;text-align:right;padding-right:2px"><span class="n4">14,781</span></div>
<div class="a" style="left:0;top:167px;width:16px;height:1px;background:#b9c6d8"></div>
<div class="a" style="left:169px;top:167px;width:647px;height:1px;background:#aaa"></div>
<div class="gc" style="left:169px;top:147px;width:49px;text-align:right;padding-right:2px"><span class="n1">1-1-8</span></div>
<div class="gc" style="left:219px;top:147px;width:61px;padding-left:2px"><span class="n2">kin000197</span></div>
<div class="kb" style="left:282px;top:148px">技術者</div>
<div class="gc" style="left:332px;top:147px;width:150px;padding-left:2px">測量技師補</div>
<div class="gc" style="left:483px;top:147px;width:170px;padding-left:2px">B時間帯</div>
<div class="gc" style="left:654px;top:147px;width:80px;text-align:right;padding-right:2px"><span class="n3">100.00%</span></div>
<div class="gc" style="left:735px;top:147px;width:80px;text-align:right;padding-right:2px"><span class="n4">16,062</span></div>
<div class="a" style="left:0;top:188px;width:16px;height:1px;background:#b9c6d8"></div>
<div class="a" style="left:169px;top:188px;width:647px;height:1px;background:#aaa"></div>
<div class="gc" style="left:169px;top:168px;width:49px;text-align:right;padding-right:2px"><span class="n1">1-1-9</span></div>
<div class="gc" style="left:219px;top:168px;width:61px;padding-left:2px"><span class="n2">kin000198</span></div>
<div class="kb" style="left:282px;top:169px">技術者</div>
<div class="gc" style="left:332px;top:168px;width:150px;padding-left:2px">測量助手</div>
<div class="gc" style="left:483px;top:168px;width:170px;padding-left:2px">B時間帯</div>
<div class="gc" style="left:654px;top:168px;width:80px;text-align:right;padding-right:2px"><span class="n3">100.00%</span></div>
<div class="gc" style="left:735px;top:168px;width:80px;text-align:right;padding-right:2px"><span class="n4">17,600</span></div>
<div class="a" style="left:0;top:209px;width:16px;height:1px;background:#b9c6d8"></div>
<div class="a" style="left:169px;top:209px;width:647px;height:1px;background:#aaa"></div>
<div class="gc" style="left:169px;top:189px;width:49px;text-align:right;padding-right:2px"><span class="n1">1-1-10</span></div>
<div class="gc" style="left:219px;top:189px;width:61px;padding-left:2px"><span class="n2"></span></div>
<div class="kb" style="left:282px;top:190px">技術者</div>
<div class="gc" style="left:332px;top:189px;width:150px;padding-left:2px">測量補助員</div>
<div class="gc" style="left:483px;top:189px;width:170px;padding-left:2px">C時間帯</div>
<div class="gc" style="left:654px;top:189px;width:80px;text-align:right;padding-right:2px"><span class="n3">100.00%</span></div>
<div class="gc" style="left:735px;top:189px;width:80px;text-align:right;padding-right:2px"><span class="n4">24,456</span></div>
<div class="a" style="left:0;top:230px;width:16px;height:1px;background:#b9c6d8"></div>
<div class="a" style="left:169px;top:230px;width:647px;height:1px;background:#aaa"></div>
<div class="gc" style="left:169px;top:210px;width:49px;text-align:right;padding-right:2px"><span class="n1">1-1-11</span></div>
<div class="gc" style="left:219px;top:210px;width:61px;padding-left:2px"><span class="n2">kin000199</span></div>
<div class="kb" style="left:282px;top:211px">技術者</div>
<div class="gc" style="left:332px;top:210px;width:150px;padding-left:2px">測量技師補</div>
<div class="gc" style="left:483px;top:210px;width:170px;padding-left:2px">C時間帯</div>
<div class="gc" style="left:654px;top:210px;width:80px;text-align:right;padding-right:2px"><span class="n3">100.00%</span></div>
<div class="gc" style="left:735px;top:210px;width:80px;text-align:right;padding-right:2px"><span class="n4">28,912</span></div>
<div class="a" style="left:0;top:251px;width:16px;height:1px;background:#b9c6d8"></div>
<div class="a" style="left:169px;top:251px;width:647px;height:1px;background:#aaa"></div>
<div class="gc" style="left:169px;top:231px;width:49px;text-align:right;padding-right:2px"><span class="n1">1-1-12</span></div>
<div class="gc" style="left:219px;top:231px;width:61px;padding-left:2px"><span class="n2">kin000200</span></div>
<div class="kb" style="left:282px;top:232px">技術者</div>
<div class="gc" style="left:332px;top:231px;width:150px;padding-left:2px">測量助手</div>
<div class="gc" style="left:483px;top:231px;width:170px;padding-left:2px">C時間帯</div>
<div class="gc" style="left:654px;top:231px;width:80px;text-align:right;padding-right:2px"><span class="n3">100.00%</span></div>
<div class="gc" style="left:735px;top:231px;width:80px;text-align:right;padding-right:2px"><span class="n4">29,120</span></div>
<div class="a" style="left:0;top:272px;width:16px;height:1px;background:#b9c6d8"></div>
<div class="a" style="left:169px;top:272px;width:647px;height:1px;background:#aaa"></div>
<div class="gc" style="left:169px;top:252px;width:49px;text-align:right;padding-right:2px"><span class="n1">1-1-13</span></div>
<div class="gc" style="left:219px;top:252px;width:61px;padding-left:2px"><span class="n2"></span></div>
<div class="kb" style="left:282px;top:253px">技術者</div>
<div class="gc" style="left:332px;top:252px;width:150px;padding-left:2px">測量補助員</div>
<div class="gc" style="left:483px;top:252px;width:170px;padding-left:2px">D時間帯</div>
<div class="gc" style="left:654px;top:252px;width:80px;text-align:right;padding-right:2px"><span class="n3">100.00%</span></div>
<div class="gc" style="left:735px;top:252px;width:80px;text-align:right;padding-right:2px"><span class="n4">17,737</span></div>
<div class="a" style="left:0;top:293px;width:16px;height:1px;background:#b9c6d8"></div>
<div class="a" style="left:169px;top:293px;width:647px;height:1px;background:#aaa"></div>
<div class="gc" style="left:169px;top:273px;width:49px;text-align:right;padding-right:2px"><span class="n1">1-1-14</span></div>
<div class="gc" style="left:219px;top:273px;width:61px;padding-left:2px"><span class="n2">kin000201</span></div>
<div class="kb" style="left:282px;top:274px">技術者</div>
<div class="gc" style="left:332px;top:273px;width:150px;padding-left:2px">測量技師補</div>
<div class="gc" style="left:483px;top:273px;width:170px;padding-left:2px">D時間帯</div>
<div class="gc" style="left:654px;top:273px;width:80px;text-align:right;padding-right:2px"><span class="n3">100.00%</span></div>
<div class="gc" style="left:735px;top:273px;width:80px;text-align:right;padding-right:2px"><span class="n4">19,275</span></div>
<div class="a" style="left:0;top:314px;width:16px;height:1px;background:#b9c6d8"></div>
<div class="a" style="left:169px;top:314px;width:647px;height:1px;background:#aaa"></div>
<div class="gc" style="left:169px;top:294px;width:49px;text-align:right;padding-right:2px"><span class="n1">1-1-15</span></div>
<div class="gc" style="left:219px;top:294px;width:61px;padding-left:2px"><span class="n2">kin000202</span></div>
<div class="kb" style="left:282px;top:295px">技術者</div>
<div class="gc" style="left:332px;top:294px;width:150px;padding-left:2px">測量助手</div>
<div class="gc" style="left:483px;top:294px;width:170px;padding-left:2px">D時間帯</div>
<div class="gc" style="left:654px;top:294px;width:80px;text-align:right;padding-right:2px"><span class="n3">100.00%</span></div>
<div class="gc" style="left:735px;top:294px;width:80px;text-align:right;padding-right:2px"><span class="n4">21,120</span></div>
<div class="a" style="left:0;top:335px;width:16px;height:1px;background:#b9c6d8"></div>
<div class="a" style="left:169px;top:335px;width:647px;height:1px;background:#aaa"></div>
<div class="gc" style="left:169px;top:315px;width:49px;text-align:right;padding-right:2px"><span class="n1">1-1-16</span></div>
<div class="gc" style="left:219px;top:315px;width:61px;padding-left:2px"><span class="n2">kin000247</span></div>
<div class="kb" style="left:282px;top:316px">技術者</div>
<div class="gc" style="left:332px;top:315px;width:150px;padding-left:2px">測量上級主任技師</div>
<div class="gc" style="left:483px;top:315px;width:170px;padding-left:2px">警戒区域内</div>
<div class="gc" style="left:654px;top:315px;width:80px;text-align:right;padding-right:2px"><span class="n3">0.00%</span></div>
<div class="gc" style="left:735px;top:315px;width:80px;text-align:right;padding-right:2px"><span class="n4">0</span></div>
<div class="a" style="left:0;top:356px;width:16px;height:1px;background:#b9c6d8"></div>
<div class="a" style="left:169px;top:356px;width:647px;height:1px;background:#aaa"></div>
<div class="gc" style="left:169px;top:336px;width:49px;text-align:right;padding-right:2px"><span class="n1">1-1-17</span></div>
<div class="gc" style="left:219px;top:336px;width:61px;padding-left:2px"><span class="n2">kin000248</span></div>
<div class="kb" style="left:282px;top:337px">技術者</div>
<div class="gc" style="left:332px;top:336px;width:150px;padding-left:2px">測量主任技師</div>
<div class="gc" style="left:483px;top:336px;width:170px;padding-left:2px">警戒区域内</div>
<div class="gc" style="left:654px;top:336px;width:80px;text-align:right;padding-right:2px"><span class="n3">0.00%</span></div>
<div class="gc" style="left:735px;top:336px;width:80px;text-align:right;padding-right:2px"><span class="n4">0</span></div>
<div class="a" style="left:0;top:377px;width:16px;height:1px;background:#b9c6d8"></div>
<div class="a" style="left:169px;top:377px;width:647px;height:1px;background:#aaa"></div>
<div class="gc" style="left:169px;top:357px;width:49px;text-align:right;padding-right:2px"><span class="n1">1-1-18</span></div>
<div class="gc" style="left:219px;top:357px;width:61px;padding-left:2px"><span class="n2">kin000249</span></div>
<div class="kb" style="left:282px;top:358px">技術者</div>
<div class="gc" style="left:332px;top:357px;width:150px;padding-left:2px">測量技師</div>
<div class="gc" style="left:483px;top:357px;width:170px;padding-left:2px">警戒区域内</div>
<div class="gc" style="left:654px;top:357px;width:80px;text-align:right;padding-right:2px"><span class="n3">0.00%</span></div>
<div class="gc" style="left:735px;top:357px;width:80px;text-align:right;padding-right:2px"><span class="n4">0</span></div>
<div class="a" style="left:0;top:398px;width:16px;height:1px;background:#b9c6d8"></div>
<div class="a" style="left:169px;top:398px;width:647px;height:1px;background:#aaa"></div>
<div class="gc" style="left:169px;top:378px;width:49px;text-align:right;padding-right:2px"><span class="n1">1-1-19</span></div>
<div class="gc" style="left:219px;top:378px;width:61px;padding-left:2px"><span class="n2">kin000250</span></div>
<div class="kb" style="left:282px;top:379px">技術者</div>
<div class="gc" style="left:332px;top:378px;width:150px;padding-left:2px">測量技師補</div>
<div class="gc" style="left:483px;top:378px;width:170px;padding-left:2px">警戒区域内</div>
<div class="gc" style="left:654px;top:378px;width:80px;text-align:right;padding-right:2px"><span class="n3">0.00%</span></div>
<div class="gc" style="left:735px;top:378px;width:80px;text-align:right;padding-right:2px"><span class="n4">0</span></div>
<div class="a" style="left:0;top:419px;width:16px;height:1px;background:#b9c6d8"></div>
<div class="a" style="left:169px;top:419px;width:647px;height:1px;background:#aaa"></div>
<div class="gc" style="left:169px;top:399px;width:49px;text-align:right;padding-right:2px"><span class="n1">1-1-20</span></div>
<div class="gc" style="left:219px;top:399px;width:61px;padding-left:2px"><span class="n2">kin000251</span></div>
<div class="kb" style="left:282px;top:400px">技術者</div>
<div class="gc" style="left:332px;top:399px;width:150px;padding-left:2px">測量助手</div>
<div class="gc" style="left:483px;top:399px;width:170px;padding-left:2px">警戒区域内</div>
<div class="gc" style="left:654px;top:399px;width:80px;text-align:right;padding-right:2px"><span class="n3">0.00%</span></div>
<div class="gc" style="left:735px;top:399px;width:80px;text-align:right;padding-right:2px"><span class="n4">0</span></div>
<div class="a" style="left:0;top:440px;width:16px;height:1px;background:#b9c6d8"></div>
<div class="a" style="left:169px;top:440px;width:647px;height:1px;background:#aaa"></div>
<div class="gc" style="left:169px;top:420px;width:49px;text-align:right;padding-right:2px"><span class="n1">1-1-21</span></div>
<div class="gc" style="left:219px;top:420px;width:61px;padding-left:2px"><span class="n2">kin000260</span></div>
<div class="kb" style="left:282px;top:421px">技術者</div>
<div class="gc" style="left:332px;top:420px;width:150px;padding-left:2px">測量技師補</div>
<div class="gc" style="left:483px;top:420px;width:170px;padding-left:2px">B時間帯 警戒区域内</div>
<div class="gc" style="left:654px;top:420px;width:80px;text-align:right;padding-right:2px"><span class="n3">0.00%</span></div>
<div class="gc" style="left:735px;top:420px;width:80px;text-align:right;padding-right:2px"><span class="n4">0</span></div>
<div class="a" style="left:218px;top:0;width:1px;height:437px;background:#aaa"></div>
<div class="a" style="left:280px;top:0;width:1px;height:437px;background:#aaa"></div>
<div class="a" style="left:331px;top:0;width:1px;height:437px;background:#aaa"></div>
<div class="a" style="left:482px;top:0;width:1px;height:437px;background:#aaa"></div>
<div class="a" style="left:653px;top:0;width:1px;height:437px;background:#aaa"></div>
<div class="a" style="left:734px;top:0;width:1px;height:437px;background:#aaa"></div>
<div class="a" style="left:815px;top:0;width:1px;height:437px;background:#aaa"></div>
<div class="t" style="left:19px;top:211px">技術者</div>
<div class="t" style="left:95px;top:211px">測量業務</div>
<div class="a" style="left:1px;top:3px;width:0;height:0;border-top:6px solid transparent;border-bottom:6px solid transparent;border-left:6.5px solid #000"></div>
</div>
<div class="a" style="left:1418px;top:379px;width:18px;height:453px;background:#f0f0f0;border-left:1px solid #fafafa"></div>
<div class="au" style="left:1423px;top:386px"></div>
<div class="sbt" style="left:1419px;top:398px;width:15px;height:278px"></div>
<div class="grip" style="left:1423px;top:533px"></div>
<div class="ad" style="left:1423px;top:822px"></div>
<div class="a" style="left:0;top:837px;width:1440px;height:1px;background:#8f8f8f"></div>
<div class="a" style="left:0;top:838px;width:1440px;height:1px;background:#fff"></div>
<div class="a" style="left:0;top:839px;width:1440px;height:20px;background:#f0eceb"></div>
<div class="a" style="left:0;top:859px;width:1440px;height:1px;background:#fff"></div>
<div class="a" style="left:0;top:860px;width:1440px;height:1px;background:#3a3a3a"></div>
<div class="t" style="left:4px;top:842px">状態</div>
<svg style="left:1247px;top:844px" width="16" height="9" viewBox="0 0 18 10"><rect x="0.5" y="2.5" width="4" height="5" fill="#d8d8d8" stroke="#888"/><rect x="4.5" y="0.5" width="13" height="9" rx="1" fill="#a62a2a" stroke="#7a1a1a"/></svg>
<div class="t" style="left:1266px;top:840px;font-size:12px;letter-spacing:.45px;height:16px;line-height:16px">507567769(192.168.1.241)</div>
</body></html>
